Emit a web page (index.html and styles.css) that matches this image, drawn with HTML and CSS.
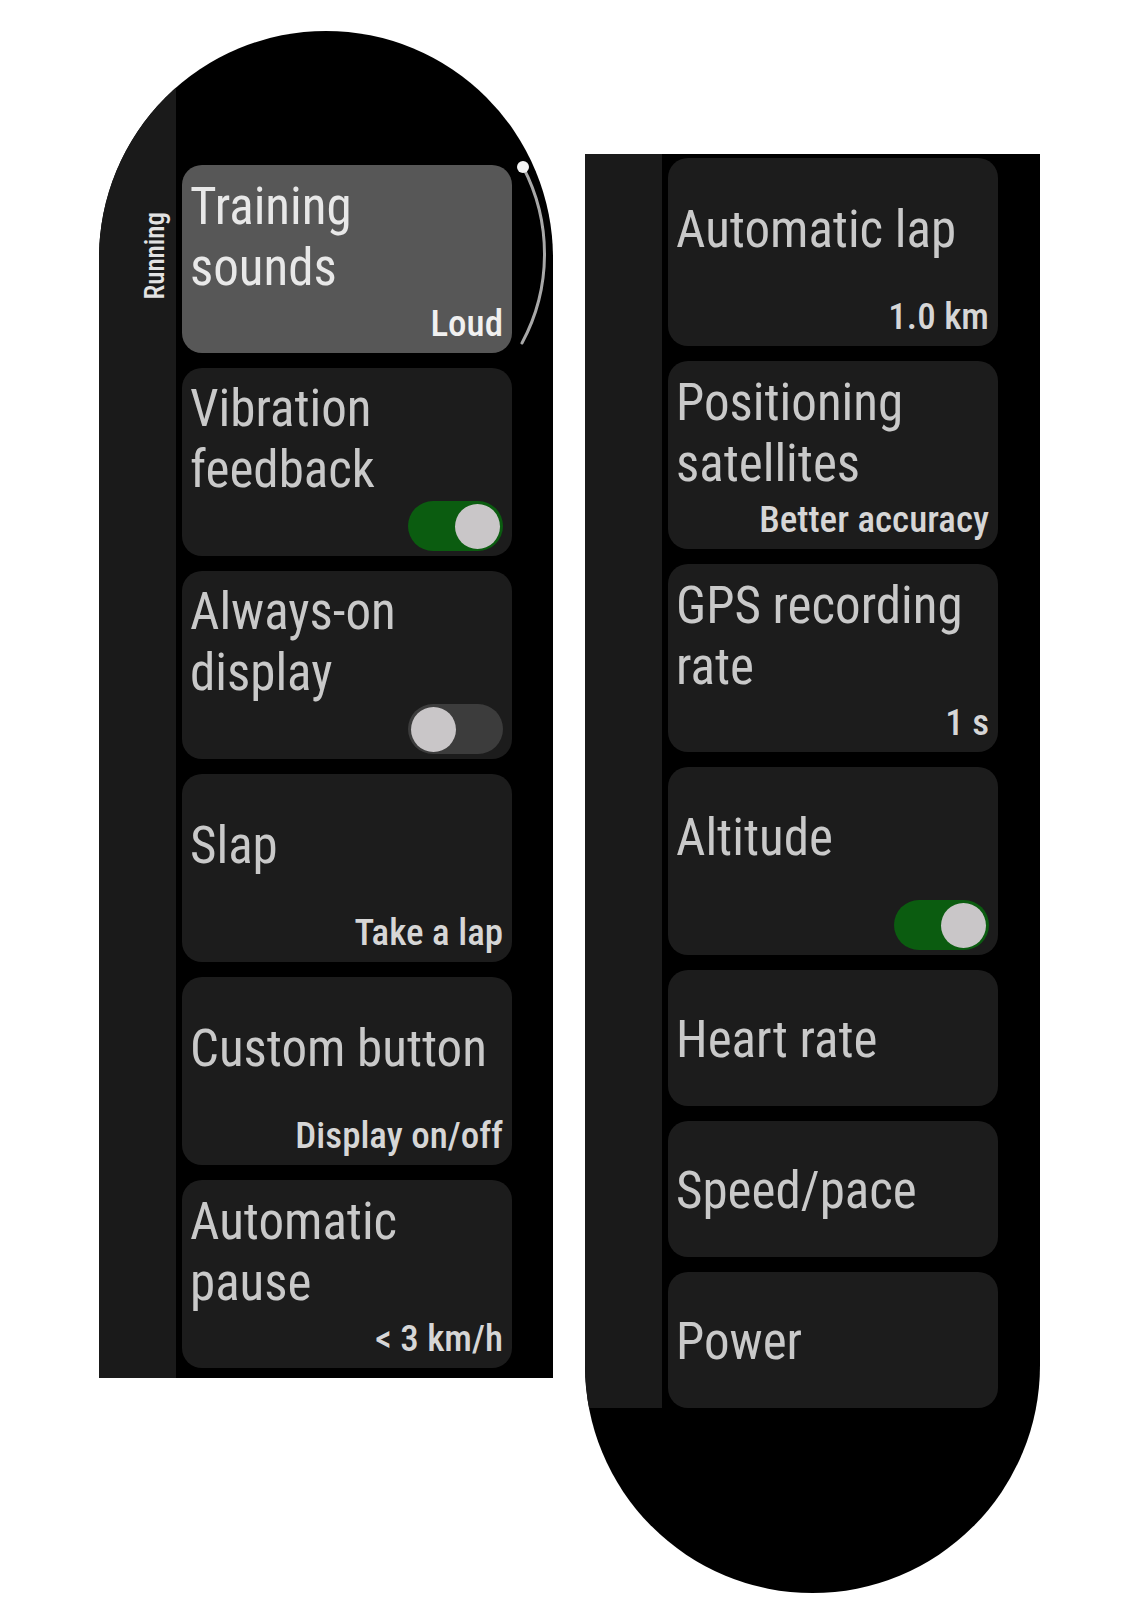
FILE: index.html
```html
<!DOCTYPE html>
<html lang="en">
<head>
    <meta charset="UTF-8">
    <meta name="viewport" content="width=device-width, initial-scale=1.0">
    <title>Running settings</title>
    <link rel="stylesheet" href="styles.css">
</head>
<body>
    <div class="screens">
        <!-- Top of the list -->
        <div class="watch watch-top">
            <div class="screen">
                <div class="side">
                    <span class="side-label">Running</span>
                </div>
                <div class="list">
                    <div class="card focused">
                        <div class="card-title"><span>Training<br>sounds</span></div>
                        <div class="card-value">Loud</div>
                    </div>
                    <div class="card">
                        <div class="card-title"><span>Vibration<br>feedback</span></div>
                        <div class="toggle on"><span class="knob"></span></div>
                    </div>
                    <div class="card">
                        <div class="card-title"><span>Always-on<br>display</span></div>
                        <div class="toggle"><span class="knob"></span></div>
                    </div>
                    <div class="card">
                        <div class="card-title"><span>Slap</span></div>
                        <div class="card-value">Take a lap</div>
                    </div>
                    <div class="card">
                        <div class="card-title"><span>Custom button</span></div>
                        <div class="card-value">Display on/off</div>
                    </div>
                    <div class="card">
                        <div class="card-title"><span>Automatic<br>pause</span></div>
                        <div class="card-value">&lt; 3 km/h</div>
                    </div>
                </div>
            </div>

            <!-- scroll position indicator -->
            <svg class="scrollbar" width="454" height="360" viewBox="0 0 454 360">
                <path d="M424 136 A187 187 0 0 1 423 312" fill="none" stroke="#a8a8a8" stroke-width="3" stroke-linecap="round"/>
                <circle cx="424" cy="136" r="6" fill="#f4f4f4"/>
            </svg>
        </div>

        <!-- Bottom of the list -->
        <div class="watch watch-bottom">
            <div class="screen">
                <div class="side"></div>
                <div class="list">
                    <div class="card">
                        <div class="card-title"><span>Automatic lap</span></div>
                        <div class="card-value">1.0 km</div>
                    </div>
                    <div class="card">
                        <div class="card-title"><span>Positioning<br>satellites</span></div>
                        <div class="card-value">Better accuracy</div>
                    </div>
                    <div class="card">
                        <div class="card-title"><span>GPS recording<br>rate</span></div>
                        <div class="card-value">1 s</div>
                    </div>
                    <div class="card">
                        <div class="card-title"><span>Altitude</span></div>
                        <div class="toggle on"><span class="knob"></span></div>
                    </div>
                    <div class="card short">
                        <div class="card-title"><span>Heart rate</span></div>
                    </div>
                    <div class="card short">
                        <div class="card-title"><span>Speed/pace</span></div>
                    </div>
                    <div class="card short">
                        <div class="card-title"><span>Power</span></div>
                    </div>
                </div>
            </div>
        </div>
    </div>
</body>
</html>
```

FILE: styles.css
```css
:root {
    --card-bg: #1c1c1c;
    --side-bg: #1a1a1a;
    --title-color: #c9c9c9;
    --value-color: #d6d6d6;
}

* {
    box-sizing: border-box;
    margin: 0;
    padding: 0;
}

body {
    background: #fff;
    font-family: "Roboto Condensed", Roboto, sans-serif;
}

.screens {
    display: flex;
    align-items: flex-start;
    gap: 32px;
    padding-left: 99px;
}

.watch {
    position: relative;
    background: #000;
    overflow: hidden;
}

.watch-top {
    width: 454px;
    height: 1347px;
    margin-top: 31px;
    border-radius: 227px 227px 0 0;
}

.watch-bottom {
    width: 455px;
    margin-top: 154px;
    padding-bottom: 185px;
    border-radius: 0 0 228px 228px;
}

.screen {
    display: grid;
    grid-template-columns: 77px 330px;
    column-gap: 6px;
}

.watch-top .screen {
    height: 100%;
}

.side {
    background: var(--side-bg);
    display: flex;
    justify-content: flex-end;
    padding: 181px 8px 0 0;
}

.side-label {
    writing-mode: vertical-rl;
    transform: rotate(180deg);
    font-size: 27px;
    line-height: 26px;
    font-weight: 500;
    color: #e2e2e2;
    align-self: flex-start;
}

.list {
    display: flex;
    flex-direction: column;
    gap: 15px;
}

.watch-top .list {
    padding: 134px 0 10px;
}

.watch-bottom .list {
    padding-top: 4px;
}

.card {
    height: 188px;
    padding: 8px 9px 5px 8px;
    border-radius: 20px;
    background: var(--card-bg);
    display: flex;
    flex-direction: column;
}

.card.short {
    height: 136px;
}

.card.focused {
    background: #575757;
}

.card-title {
    flex: 1;
    display: flex;
    align-items: center;
    font-size: 51px;
    line-height: 61px;
    color: var(--title-color);
}

.focused .card-title {
    color: #e8e8e8;
}

.card-value {
    text-align: right;
    font-size: 37px;
    line-height: 48px;
    font-weight: 500;
    color: var(--value-color);
}

.focused .card-value {
    color: #f0f0f0;
}

.toggle {
    align-self: flex-end;
    width: 95px;
    height: 50px;
    padding: 0 3px;
    border-radius: 25px;
    background: #3c3c3c;
    display: flex;
    align-items: center;
    justify-content: flex-start;
}

.toggle.on {
    background: #0b5c10;
    justify-content: flex-end;
}

.knob {
    width: 45px;
    height: 45px;
    border-radius: 50%;
    background: #c9c6c8;
}

.scrollbar {
    position: absolute;
    top: 0;
    left: 0;
    pointer-events: none;
}
```
